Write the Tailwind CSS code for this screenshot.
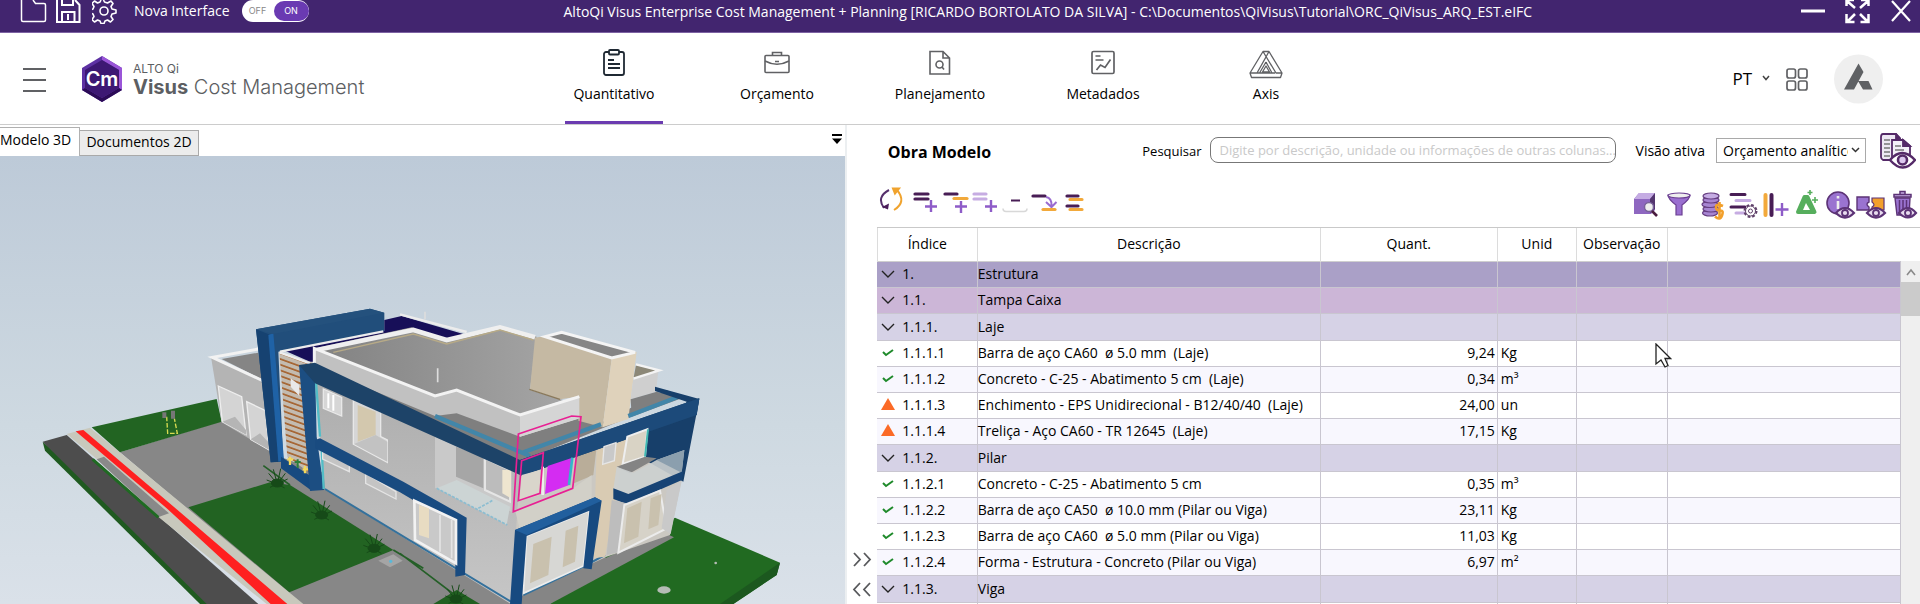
<!DOCTYPE html>
<html lang="pt">
<head>
<meta charset="utf-8">
<title>AltoQi Visus Cost Management</title>
<script src="https://cdn.jsdelivr.net/npm/@tailwindcss/browser@4"></script>
</head>
<body class="bg-white text-black font-['Open_Sans','Noto_Sans',sans-serif] text-sm h-screen overflow-hidden flex flex-col">

<header class="relative h-[33px] shrink-0 bg-[#42256f] border-b border-[#7d62a3] text-white flex items-start overflow-hidden">
  <div class="flex items-start pl-5">
    <button aria-label="Abrir"><svg width="28" height="24" fill="none" stroke="#fff" stroke-width="1.5"><path d="M1.500 0v20q0 1.500 1.500 1.500h21q1.500 0 1.500-1.500V5q0-1.500-1.500-1.500H15.500L13 0"/></svg></button>
    <button aria-label="Salvar" class="ml-2"><svg width="26" height="24" fill="none" stroke="#fff" stroke-width="2"><path d="M1 0v22h22.500V5L19 0M6 22V12h12.500v10M6 0v5h11V0M12 14v6"/></svg></button>
    <button aria-label="Configurações" class="ml-2.5"><svg width="26" height="24" fill="none" stroke="#fff" stroke-width="1.600" stroke-linejoin="round"><path d="M11.500 0l1 2 3 1 3.500-2 2 2.500-2 3 1 2.500 4 1v3l-4 1-1 2.500 2 3-2.500 2.500-3-2-2.500 1-1 2.500h-3l-1-2.500-2.500-1-3 2-2.500-2.500 2-3-1-2.500-3-1v-3l3-1 1-2.500-2-3 2.500-2.500 3 2 2.500-1 1-2"/><circle cx="12" cy="11" r="4"/></svg></button>
  </div>
  <span class="ml-4 leading-[22px] text-sm">Nova Interface</span>
  <button role="switch" aria-checked="true" class="ml-3 h-[22px] w-[67px] bg-white rounded-full flex items-center text-[9px] font-['Inter',sans-serif]"><span class="w-8 text-center text-[#888]">OFF</span><span class="h-5 flex-1 rounded-full bg-[#6a3ab2] text-white flex items-center justify-center">ON</span></button>
  <h1 class="ml-[255px] text-sm leading-[24px] whitespace-nowrap">AltoQi Visus Enterprise Cost Management + Planning [RICARDO BORTOLATO DA SILVA] - C:\Documentos\QiVisus\Tutorial\ORC_QiVisus_ARQ_EST.eIFC</h1>
  <div class="ml-auto flex pr-2">
    <button aria-label="Minimizar"><svg width="26" height="24"><path d="M1 11h24" stroke="#fff" stroke-width="3"/></svg></button>
    <button aria-label="Maximizar" class="ml-[18px]"><svg width="28" height="24" fill="none" stroke="#fff" stroke-width="2.500"><path d="M3 22l8-8M24 22l-8-8M3 1l8 7M24 1l-8 7M2.500 14v8h8M24.500 14v8h-8M2.500 6V0M24.500 6V0M4 0h6M17 0h6"/></svg></button>
    <button aria-label="Fechar" class="ml-[18px]"><svg width="22" height="24"><path d="M2 1l18 20M20 1L2 21" stroke="#fff" stroke-width="2.200"/></svg></button>
  </div>
</header>

<div class="h-[92px] shrink-0 border-b border-[#cccccc] flex items-stretch">
  <div class="w-[565px] shrink-0 flex items-center pl-[22px]">
    <button aria-label="Menu"><svg width="26" height="26"><path d="M1 3h23M1 14h23M1 25h23" stroke="#606164" stroke-width="2"/></svg></button>
    <svg class="ml-[33px]" width="42" height="46" viewBox="0 0 42 46"><path d="M21 0L41 12V34L21 46L1 34V12z" fill="#5d31a3"/><path d="M21 0L41 12V34L38 32V14L21 4z" fill="#9a55d8"/><path d="M1 34L21 46L41 34L38 32L21 42L4 32z" fill="#2b0b56"/><path d="M21 4L38 14V32L21 42L4 32V14z" fill="#3d1873"/><text x="21" y="30" text-anchor="middle" font-family="Inter" font-weight="600" font-size="20" fill="#fff">Cm</text></svg>
    <div class="ml-2.5 text-[#5c5e62] font-['Inter',sans-serif] pt-1">
      <div class="text-xs leading-3">ALTO Qi</div>
      <div class="text-xl leading-6 font-light"><span class="font-bold">Visus</span> Cost Management</div>
    </div>
  </div>
  <nav class="flex gap-[65px] text-sm">
    <a href="#" class="w-[98px] border-b-3 border-[#6b3bb0] flex flex-col items-center pt-4"><svg width="22" height="28" fill="none" stroke="#1f2933" stroke-width="1.800"><rect x="1" y="3" width="20" height="23" rx="2"/><rect x="6" y="1" width="10" height="4.500" rx="1" fill="#fff"/><path d="M5 11h6M5 15h12M5 19h12"/></svg><span class="mt-1.5 leading-[22px]">Quantitativo</span></a>
    <a href="#" class="w-[98px] flex flex-col items-center pt-4"><svg width="26" height="28" fill="none" stroke="#606164" stroke-width="1.600"><rect x="1" y="6.500" width="24" height="17" rx="1"/><path d="M8.500 6V3.500h9V6M1 12q12 6.500 24 0M11 12.500h4"/></svg><span class="mt-1.5 leading-[22px]">Orçamento</span></a>
    <a href="#" class="w-[98px] flex flex-col items-center pt-4"><svg width="22" height="28" fill="none" stroke="#606164" stroke-width="1.600"><path d="M1 2.500h13l6.500 6.500v16H1zM14 2.500V9h6.500"/><circle cx="10.500" cy="15.500" r="3.500"/><path d="M13 18l2 2.500"/></svg><span class="mt-1.5 leading-[22px]">Planejamento</span></a>
    <a href="#" class="w-[98px] flex flex-col items-center pt-4"><svg width="24" height="28" fill="none" stroke="#606164" stroke-width="1.700"><rect x="1" y="2.500" width="22" height="22" rx="1.500"/><path d="M4.500 7h5M4.500 11h8M5.500 21l4-5 4.500 2.500 5.500-8"/></svg><span class="mt-1.5 leading-[22px]">Metadados</span></a>
    <a href="#" class="w-[98px] flex flex-col items-center pt-4"><svg width="34" height="30" class="-mb-0.5" fill="none" stroke="#606164" stroke-width="1.300" stroke-linejoin="round"><path d="M14 2.500h6L33 24l-1.500 4.500h-29L1 24zM1 24h25M14 2.500L27 24h6M20 2.500L8 24M17 8L8 24M17 13l-6.500 11M17 13l6 11M17 17l-3.500 6h7z"/></svg><span class="mt-1.5 leading-[22px]">Axis</span></a>
  </nav>
  <div class="ml-auto flex items-center pr-[37px]">
    <button class="flex items-center text-[17px] leading-6">PT<svg class="ml-2.5" width="8" height="12" fill="none" stroke="#444" stroke-width="1.500"><path d="M1 3l3 3.500L7 3"/></svg></button>
    <button aria-label="Aplicativos" class="ml-4"><svg width="22" height="24" fill="none" stroke="#606164" stroke-width="1.700"><rect x="1" y="2" width="8.500" height="9" rx="2"/><rect x="12.500" y="2" width="8.500" height="9" rx="2"/><rect x="1" y="14" width="8.500" height="9" rx="2"/><rect x="12.500" y="14" width="8.500" height="9" rx="2"/></svg></button>
    <button aria-label="Conta" class="ml-[26px]"><svg width="49" height="50"><circle cx="24.500" cy="25" r="24.500" fill="#efefef"/><path d="M24.500 9.500l5 8.500-9.500 17.500H10zM24 27h10.500l4 8.500H29z" fill="#5f6164"/></svg></button>
  </div>
</div>

<main class="flex-1 min-h-0 flex">
  <section class="w-[44%] shrink-0 flex flex-col">
    <div class="h-[31px] shrink-0 flex items-end text-sm">
      <button class="h-[29px] w-20 border-t border-r border-[#b0b0b0] bg-white text-left leading-5 pb-1 whitespace-nowrap">Modelo 3D</button>
      <button class="h-[26px] w-[119px] border border-l-0 border-[#a9a9a9] bg-[#ececec] leading-5 pb-0.5 whitespace-nowrap">Documentos 2D</button>
      <button aria-label="Opções" class="ml-auto mr-0.5 mb-2.5"><svg width="12" height="14"><path d="M1 3h10" stroke="#000" stroke-width="2"/><path d="M1 6.500h10L6 12z"/></svg></button>
    </div>
    <svg class="w-full flex-1 min-h-0" viewBox="0 -402 2535 1344" preserveAspectRatio="xMinYMin slice" role="img" aria-label="Modelo 3D da obra">
      <defs>
        <linearGradient id="sky" x1="0" y1="0" x2="0" y2="1"><stop offset="0" stop-color="#bdcad8"/><stop offset=".6" stop-color="#ced9e1"/><stop offset="1" stop-color="#dae1e9"/></linearGradient>
        <linearGradient id="roof" x1="0" x2="1"><stop offset="0" stop-color="#828282"/><stop offset="1" stop-color="#a5a5a5"/></linearGradient>
        <linearGradient id="wall" x1="0" x2="0" y2="1"><stop offset="0" stop-color="#adadad"/><stop offset="1" stop-color="#c6c6c6"/></linearGradient>
        <pattern id="slats" width="20" height="17" patternUnits="userSpaceOnUse" patternTransform="skewY(20)"><path d="M0 0h20v17H0z" fill="#c3bbb0"/><path d="M0 3h20" stroke="#a35c26" stroke-width="5"/></pattern>
        <g id="bush" stroke="#164a18" stroke-width="3"><path d="M0 20L-26-12M0 20L-12-24M0 20L10-26M0 20L24-12M0 20L-32 8M0 20L31 5M0 20L-22 30M0 20L22 32"/><ellipse cx="0" cy="17" rx="18" ry="12" fill="#164a18"/></g>
      </defs>
      <path d="M0-402H2535V942H0z" fill="url(#sky)"/>
      <path d="M128 455L135 482L600 942H700z" fill="#1f5a20"/>
      <path d="M128 455L200 435L775 942H620z" fill="#4d4d4d"/>
      <path d="M360 487L665 393L840 500L1800 850L1700 942H900z" fill="#878787"/>
      <path d="M200 432L270 413L910 942H800L480 685L290 507z" fill="#c8c8bc"/>
      <path d="M290 508L312 500L507 670L478 680z" fill="#898989"/><path d="M278 508L475 682" stroke="#1f6a22" stroke-width="9"/>
      <path d="M227 424L250 420L530 658L862 942H812L500 655z" fill="#ff2020"/>
      <path d="M275 412L650 327L665 395L360 487z" fill="#226422"/>
      <path d="M565 652L810 577L870 585L1180 780L868 907z" fill="#226322"/>
      <path d="M1200 790L1400 942M790 527L870 585M1180 780L1270 835" stroke="#245f27" stroke-width="5"/>
      <path d="M1135 812L1180 793L1208 812L1170 832z" fill="#a5a5a5"/><circle cx="1172" cy="814" r="5" fill="#59b8d8"/>
      <path d="M500 380L503 430H532L523 385" stroke="#d9dc51" stroke-width="4" fill="none" stroke-dasharray="14 5"/><path d="M493 367V384M519 362V386" stroke="#777" stroke-width="12"/>
      <path d="M2025 683L2340 818L2330 855L2200 942H1650L1820 800z" fill="#216a21"/><path d="M2340 818L2330 855L2200 942H2160z" fill="#1c581f"/>
      <path d="M1550 890L1980 722L2022 742L1650 942H1520z" fill="#858585"/><path d="M1815 800L1980 722" stroke="#216a21" stroke-width="9"/>
      <ellipse cx="1992" cy="900" rx="20" ry="11" fill="#b5bcb5"/><circle cx="2147" cy="819" r="4" fill="#b5bcb5"/>
      <path d="M1300 942L1370 900L1440 942z" fill="#216021"/>
      <use href="#bush" x="832" y="562"/><use href="#bush" x="965" y="658"/><use href="#bush" x="1122" y="758"/><use href="#bush" x="1368" y="910"/>
      <!-- garage wing -->
      <path d="M633 200L790 270L812 484L665 397z" fill="#b4b4b4"/><path d="M655 288L725 320L738 434L667 395zM740 335L797 362L808 480L752 448z" fill="#d4d4d4" stroke="#eee" stroke-width="4"/><path d="M667 395L705 380L738 420V434zM752 448L780 430L808 460V480z" fill="#b5b5b5"/>
      <path d="M665 207L775 188L790 270z" fill="#858585"/><path d="M775 177L637 202L790 273" fill="none" stroke="#f2f2f2" stroke-width="9"/>
      <!-- blue tower -->
      <path d="M768 118L1110 56L1153 68V125L835 185L850 515L812 517z" fill="#214e7b"/><path d="M768 118L812 135L838 515L812 517z" fill="#164271"/><path d="M805 135L820 130L852 510L835 515z" fill="#1f62a6"/><path d="M768 118L1110 56L1153 68L820 132z" fill="#24517d"/>
      <path d="M855 182L1153 123V90L1205 78L1390 132L1340 160L1230 125L945 180V215H930z" fill="#170f58"/><path d="M840 185L1150 124M1200 73L1400 126" stroke="#ececec" stroke-width="7"/>
      <path d="M838 187L945 220V560L862 500z" fill="url(#slats)"/><path d="M838 187L930 220" stroke="#eee" stroke-width="7"/><path d="M872 265L898 285V318L872 290z" fill="#e9e9e9"/>
      <path d="M843 500L935 560V602L843 535z" fill="#174a80"/><path d="M870 500v25M915 528v22M862 508h18M908 538h16" stroke="#f4d95b" stroke-width="7"/><path d="M893 508v26M884 516h18" stroke="#2c7f3b" stroke-width="6"/>
      <!-- front walls -->
      <path d="M945 275L1565 540L1533 942L975 597z" fill="url(#wall)"/>
      <path d="M1560 545L2090 370L2045 570L2010 735L1820 800L1570 915L1533 942z" fill="#cbc8c2"/>
      <path d="M975 597L1533 935M1570 915L1750 830L1815 795" stroke="#34719c" stroke-width="6" fill="none"/>
      <path d="M897 225L945 235L950 440L972 600L930 603z" fill="#1c4e82"/><path d="M948 275L960 440M965 475L971 597" stroke="#53bdc7" stroke-width="7"/>
      <path d="M970 297L1025 322V378L970 355zM1060 330L1142 365V440L1162 450V517L1060 462z" fill="#d6d6d6" stroke="#e8e8e8" stroke-width="4"/><path d="M1073 345L1127 365V435L1073 455z" fill="#d3c8ae"/><path d="M1062 462L1127 435L1162 455V515z" fill="#c2c2c2"/><path d="M985 310V355M1000 315V362" stroke="#fff" stroke-width="6"/>
      <path d="M968 478L1048 525V545L968 507zM1097 550L1188 605V627L1097 580z" fill="#c4c4c4" stroke="#e4e4e4" stroke-width="4"/>
      <!-- upper left terrace opening -->
      <path d="M1305 440L1535 540V665L1365 600L1305 595z" fill="#c9c9c9"/><path d="M1368 470L1450 500V595L1368 560z" fill="#a6a6a6"/><path d="M1455 505L1530 540V635L1455 600z" fill="#bcbcbc" stroke="#e5e5e5" stroke-width="6"/><path d="M1507 540h26v85l-26-15z" fill="#eee5cf"/>
      <path d="M1310 595L1370 570L1530 650L1520 705z" fill="#ccd4d4"/><path d="M1310 595L1522 705M1435 655L1480 630" stroke="#8bbdd1" stroke-width="5" stroke-dasharray="9 4"/>
      <!-- roof well and parapets -->
      <path d="M945 175L1235 112L1340 150L1500 108L1610 140L1590 300L1690 330L1560 375L1370 305L1305 320z" fill="url(#roof)"/>
      <path d="M950 180L1240 120L1340 150L1500 112L1605 142" fill="none" stroke="#efefef" stroke-width="14"/><path d="M1000 187L1240 132L1340 162L1500 120L1600 150" fill="none" stroke="#b7aa87" stroke-width="4"/>
      <path d="M943 175L1305 318L1370 300L1560 375L1738 320V400L1560 455L1370 372L1305 380L945 235z" fill="#c1c1c1"/><path d="M1560 375L1738 320V400L1560 455z" fill="#d5d5d5"/>
      <path d="M950 232L1305 378L1370 370L1560 440L1740 385L1800 400L2000 300L2040 320L1560 515z" fill="#7f7f7f"/>
      <!-- stair tower -->
      <path d="M1605 143L1635 138L1835 207L1808 412L1735 392V320L1680 328L1590 298z" fill="#c5b9a3"/><path d="M1835 207L1910 185L1885 387L1808 412z" fill="#dfd2bb"/><path d="M1635 140L1685 127L1905 187L1835 204z" fill="#868686" stroke="#f4f4f4" stroke-width="9"/>
      <path d="M1560 375L1738 320V385L1560 440z" fill="#d5d5d5"/><path d="M943 240V175L1305 318L1370 300L1560 375L1738 320" fill="none" stroke="#f3f3f3" stroke-width="9"/>
      <path d="M1588 298L1680 328" stroke="#8a795b" stroke-width="4"/><path d="M1908 225L1978 242L1900 268z" fill="#8c8878"/><path d="M1900 268L1975 243L1968 305L1892 328z" fill="#cfcfcf"/><path d="M1908 223L1978 241L1900 266" fill="none" stroke="#f4f4f4" stroke-width="7"/>
      <path d="M1892 328L1970 305L2045 325L1895 380z" fill="#7f7f7f"/>
      <path d="M1790 475L1880 440L1815 800L1780 805z" fill="#d9cbb3"/><path d="M1730 490L1790 470L1780 555L1722 580z" fill="#b9ad99"/>
      <path d="M1305 378L1590 498M1570 487L1803 403M1885 378L2035 320" stroke="#4286a9" stroke-width="13"/>
      <path d="M1965 290L2098 327L2050 575L1935 510L1945 420L2030 390L2060 335L1965 303z" fill="#173f6a"/>
      <path d="M897 225L945 218L1560 510L2098 325L2090 375L1565 557L945 280z" fill="#1d4368"/><path d="M1560 510L2098 325L2090 375L1565 557z" fill="#1c4a7a"/>
      <path d="M945 450L960 445L1210 575L1400 683L1395 855L1366 860V705L1200 607L945 475z" fill="#194b80"/>
      <!-- openings on the right side -->
      <path d="M1243 632L1368 690V820L1245 750z" fill="#c9c9c9" stroke="#f2f2f2" stroke-width="8"/><path d="M1257 645L1287 655V745L1257 735z" fill="#e8dcc2"/><path d="M1320 675V785M1355 690V805" stroke="#e4e4e4" stroke-width="5"/>
      <path d="M1565 555L1620 540V615L1558 632z" fill="#d9d5cb"/><path d="M1545 660L1720 595L1775 555V630L1560 720z" fill="#d2d0c8"/>
      <path d="M1643 528L1717 503L1708 585L1635 612z" fill="#d42cf2"/><path d="M1717 503L1707 585" stroke="#34b6c8" stroke-width="8"/><path d="M1628 530V615" stroke="#eee" stroke-width="8"/>
      <path d="M1812 470L1848 458L1843 512L1808 523z" fill="#c9c9c9" stroke="#e6e6e6" stroke-width="4"/><path d="M1882 440L1942 418L1935 500L1868 522z" fill="#d9d3c5" stroke="#eee" stroke-width="6"/><path d="M1944 418L1935 500" stroke="#41b8b1" stroke-width="6"/>
      <path d="M1850 530L1935 500L1970 505L1890 550z" fill="#848484"/><path d="M1850 530L1900 548L1970 510L2053 480L2045 548L1885 612L1840 597z" fill="#ccd0d0" opacity=".9"/><path d="M1970 510L2053 480L2045 548z" fill="#8b9fae"/>
      <path d="M1840 595L1885 612L2050 543L2046 570L1881 642L1840 627z" fill="#174374"/>
      <path d="M1835 630L1880 640L1860 785L1820 795z" fill="#bdbdbd"/><path d="M1873 645L1980 602L2000 715L1855 788z" fill="#d6d2c8" stroke="#ebebeb" stroke-width="6"/><path d="M1882 655L1925 635L1915 740L1872 760zM1952 625L1985 612L1975 705L1945 718z" fill="#c9c1ae"/><path d="M2000 600L2045 572L2012 732L1985 715z" fill="#c9c9c9"/>
      <path d="M1580 738L1768 662L1750 828L1570 910z" fill="#d7d7d4" stroke="#ececec" stroke-width="5"/><path d="M1600 762L1655 740L1645 855L1590 880zM1697 722L1735 707L1725 815L1688 832z" fill="#c9c1ae"/>
      <path d="M1545 720L1785 622L1805 632L1775 838L1750 835L1768 662L1580 738L1565 942H1530z" fill="#174a80"/><path d="M1545 720L1785 622L1805 632L1580 735z" fill="#215f9e"/>
      <path d="M1555 432L1715 378L1743 380L1718 595L1540 665zM1565 512L1630 488L1620 610L1555 632z" fill="none" stroke="#e81f93" stroke-width="5"/>
      <path d="M1313 235V277M1275 65V88" stroke="#ddd" stroke-width="5"/>
    </svg>
  </section>

  <div class="w-8 shrink-0 flex flex-col justify-end items-center text-[#555] border-l-2 border-[#eceff1]">
    <button aria-label="Expandir"><svg width="20" height="30" fill="none" stroke="#58595c" stroke-width="1.800"><path d="M2 9l6 6.500L2 22M12 9l6 6.500L12 22"/></svg></button>
    <button aria-label="Recolher"><svg width="20" height="30" fill="none" stroke="#58595c" stroke-width="1.800"><path d="M8 9l-6 6.500L8 22M18 9l-6 6.500L18 22"/></svg></button>
  </div>

  <section class="flex-1 min-w-0 flex flex-col">
    <div class="h-[61px] shrink-0 pt-2 pl-[11px] pr-1 flex items-start">
      <h2 class="font-bold text-base leading-[38px] whitespace-nowrap">Obra Modelo</h2>
      <label for="q" class="ml-auto leading-9 text-[13px]">Pesquisar</label>
      <input id="q" type="text" placeholder="Digite por descrição, unidade ou informações de outras colunas..." class="mt-1 ml-2 h-[26px] w-[406px] rounded-lg border border-[#777] pl-[9px] pr-0 text-[13px] placeholder:text-[#c9c9c9]">
      <label for="v" class="ml-5 leading-9 text-sm whitespace-nowrap">Visão ativa</label>
      <div class="relative ml-[11px] mt-[5px]"><select id="v" class="appearance-none h-[25px] w-[150px] border border-[#a9a9a9] bg-white pl-1.5 pr-[17px] text-sm leading-5 overflow-hidden"><option>Orçamento analítico</option></select><svg class="absolute right-1.5 top-2 pointer-events-none" width="9" height="8" fill="none" stroke="#333" stroke-width="1.500"><path d="M1 2l3.500 3.500L8 2"/></svg></div>
      <button aria-label="Visualizar documentos" class="ml-3.5"><svg width="36" height="36" fill="none" stroke="#552a68" stroke-width="1.800"><path d="M3 1h13l4 4v22H3q-2-1-2-3V4q0-3 2-3z" fill="#eee8f4"/><path d="M12 7h11l7 6v13H12z" fill="#f4f0f8"/><path d="M16 1l4 5h-4zM23 7l7 6h-7z" fill="#552a68"/><path d="M4 7h6M4 11h6M4 15h6M4 19h6M4 23h6M15 13h6M15 17h9" stroke="#777" stroke-width="1.300"/><path d="M10 27q12-14 25 0q-12 15-25 0z" fill="#fff" stroke-width="2.400"/><circle cx="22.500" cy="27" r="4.500" fill="#ddc9ef" stroke-width="2.600"/></svg></button>
    </div>

    <div class="h-[41px] shrink-0 pl-0.5 flex items-start justify-between">
      <div class="flex">
        <button aria-label="Atualizar" class="w-[30px]"><svg width="30" height="32" fill="none" stroke-width="2"><path d="M10 4Q-3 11 5 22" stroke="#56306c"/><path d="M3 21l6 2.500 1-6z" fill="#4a1c59"/><path d="M15 24Q28 16 18 4" stroke="#f0a32e"/><path d="M14 2.500h6l-4 5z" fill="#f0a32e" stroke="#f0a32e"/></svg></button>
        <button aria-label="Adicionar nível" class="w-[30px]"><svg width="30" height="32" fill="none"><path d="M6 8h13M6 13h13" stroke="#481d55" stroke-width="3.200" stroke-linecap="round"/><path d="M22 14v12M16 20.500h12" stroke="#8e5cc8" stroke-width="2.400"/></svg></button>
        <button aria-label="Adicionar subnível" class="w-[30px]"><svg width="30" height="32" fill="none"><path d="M6 8h12" stroke="#481d55" stroke-width="3.200" stroke-linecap="round"/><path d="M15 12.500h13" stroke="#f2a93b" stroke-width="3.200" stroke-linecap="round"/><path d="M22 15v12M16 20.500h12" stroke="#8e5cc8" stroke-width="2.400"/></svg></button>
        <button aria-label="Adicionar item" class="w-[30px]"><svg width="30" height="32" fill="none"><path d="M5 8h12M5 13h12" stroke="#c6ace2" stroke-width="3.200" stroke-linecap="round"/><path d="M22 14v12M16 20.500h12" stroke="#8e5cc8" stroke-width="2.400"/></svg></button>
        <button aria-label="Remover" class="w-[30px]"><svg width="30" height="32" fill="none"><path d="M4 22.500q0 3 3 3h18q3 0 3-3" stroke="#d8d8d8" stroke-width="1.500"/><path d="M12 14.500h9" stroke="#481d55" stroke-width="2"/></svg></button>
        <button aria-label="Mover" class="w-[30px]"><svg width="30" height="32" fill="none"><path d="M4 10h12" stroke="#481d55" stroke-width="3.200" stroke-linecap="round"/><path d="M17 11q6 1 5.500 9M17 16l5.500 5 5-5" stroke="#9a6bd0" stroke-width="2"/><path d="M14 23.500h12" stroke="#f2a93b" stroke-width="3.200" stroke-linecap="round"/></svg></button>
        <button aria-label="Agrupar" class="w-[30px]"><svg width="30" height="32" fill="none" stroke-width="3.200" stroke-linecap="round"><path d="M8 10h11M8 20h11" stroke="#481d55"/><path d="M11 13.500h12M11 23.500h12" stroke="#f2a93b"/></svg></button>
      </div>
      <div class="flex">
        <button aria-label="Inspecionar" class="w-8"><svg width="32" height="34" fill="none"><path d="M2 13l5-6h16v17l-4 4H2z" fill="#8e67c0"/><path d="M2 13l5-6h16l-5 6z" fill="#c5ace3"/><path d="M23 7l-5 6v14l5-4z" fill="#54366f"/><circle cx="17" cy="21" r="4.500" fill="#eee" stroke="#79639a" stroke-width="1.500"/><path d="M20 25l5 5" stroke="#4a1c3f" stroke-width="2.600"/></svg></button>
        <button aria-label="Filtrar" class="w-8"><svg width="32" height="34" stroke="#6b3f91" stroke-width="1.200"><path d="M4 9q0 4 8 10v10h6V19q8-6 8-10z" fill="#9a6fd0"/><ellipse cx="15" cy="9.500" rx="11" ry="2.500" fill="#eee"/></svg></button>
        <button aria-label="Custos" class="w-8"><svg width="32" height="34" fill="#a785d2" stroke="#653d80" stroke-width="1.200"><ellipse cx="14" cy="27" rx="7.500" ry="3"/><ellipse cx="15" cy="23" rx="8" ry="3"/><ellipse cx="14" cy="18.500" rx="8" ry="3"/><ellipse cx="15" cy="14" rx="8" ry="3"/><ellipse cx="15" cy="10" rx="8" ry="3" fill="#c5ace3"/><path d="M27 20q-7-3-7 1t4 3.500 2 5-7 1M23.500 16v17" fill="none" stroke="#f2a02c" stroke-width="2.600"/></svg></button>
        <button aria-label="Configurar lista" class="w-8"><svg width="32" height="34" fill="none"><path d="M3 8.500h14M3 21h14" stroke="#481d55" stroke-width="3" stroke-linecap="round"/><path d="M8 14.500h14M8 27h9" stroke="#c6ace2" stroke-width="3" stroke-linecap="round"/><circle cx="22.500" cy="25" r="5.500" stroke="#5f4069" stroke-width="3" stroke-dasharray="2.500 1.800" fill="#fff"/><circle cx="22.500" cy="25" r="5" fill="#fff" stroke="#5f4069"/><circle cx="22.500" cy="25" r="2" stroke="#5f4069"/></svg></button>
        <button aria-label="Adicionar coluna" class="w-8"><svg width="32" height="34" fill="none"><path d="M5.500 9v20" stroke="#f2a93b" stroke-width="4" stroke-linecap="round"/><path d="M11.500 9v20" stroke="#481d55" stroke-width="4" stroke-linecap="round"/><path d="M22 17v13M15.500 23.500h13" stroke="#8e5cc8" stroke-width="2.400"/></svg></button>
        <button aria-label="Assistente" class="w-8"><svg width="32" height="34" fill="none" stroke="#56ae5d"><path d="M12.500 11h3l7 15H6z" stroke-width="4" stroke-linejoin="round" fill="#56ae5d"/><path d="M14 17l4 7h-7z" fill="#fff" stroke="none"/><path d="M18 4v5M15.500 6.500h5M23 11v6M20 14h6" stroke-width="1.600"/></svg></button>
        <button aria-label="Exibir informações" class="w-8"><svg width="32" height="34" fill="none" stroke="#5c3376"><circle cx="14" cy="17" r="11" fill="#9a73d0" stroke-width="1.600"/><path d="M14 15v8M14 10v2.500" stroke="#eee" stroke-width="2.600"/><path d="M12 27q9-10 18 0q-9 9-18 0z" fill="#e8dcef" stroke-width="2.200"/><circle cx="21" cy="27" r="3" stroke-width="1.800"/></svg></button>
        <button aria-label="Exibir vínculos" class="w-8"><svg width="32" height="34" fill="none" stroke="#5c3376"><path d="M1 11h12v5q-4 2 0 5v3H1z" fill="#9a73d0" stroke-width="1.400"/><path d="M16 12h12v12H16v-3q4-2 0-5z" fill="#f2a02c" stroke-width="1.200"/><path d="M11 27q9-10 18 0q-9 9-18 0z" fill="#e8dcef" stroke-width="2.200"/><circle cx="20" cy="27" r="3" stroke-width="1.800"/></svg></button>
        <button aria-label="Exibir excluídos" class="w-8"><svg width="32" height="34" fill="none" stroke="#5c3376"><path d="M7 12h15l-1 17H9z" fill="#9a73d0" stroke-width="1.400"/><path d="M6 11V8.500h17V11zM12 8V5.500h5V8M11.500 14v12M15 14v12M18.500 14v8" fill="#c5ace3" stroke-width="1.500"/><path d="M11 27q9-10 17 0q-8 9-17 0z" fill="#e8dcef" stroke-width="2.200"/><circle cx="20" cy="27" r="3" stroke-width="1.800"/></svg></button>
      </div>
    </div>

    <div class="relative flex-1 min-h-0 overflow-hidden flex border-t border-[#c9c9c9]">
      <table class="flex-1 table-fixed border-collapse w-full text-sm">
        <colgroup><col class="w-[100px]"><col class="w-[343px]"><col class="w-[177px]"><col class="w-[79px]"><col class="w-[91px]"><col></colgroup>
        <thead><tr class="h-[33px] border-b border-[#cfcfcf] *:border-r *:border-[#dcdcdc] *:font-normal *:last:border-r-0"><th class="border-l">Índice</th><th>Descrição</th><th>Quant.</th><th>Unid</th><th>Observação</th><th></th></tr></thead>
        <tbody id="rows"></tbody>
      </table>
      <div class="w-[19px] shrink-0 mt-[33px] bg-[#efefef]" role="scrollbar" aria-controls="rows" aria-valuenow="0"><svg width="19" height="21" fill="none" stroke="#8a8a8a" stroke-width="1.600"><path d="M6 14l4-5 4 5"/></svg><div class="h-[34px] bg-[#cbcbcb]"></div></div>
      <svg class="absolute left-[778px] top-[115px]" width="17" height="26"><path d="M1 1v20l5-4 4 7 3-1.500-3-7h5.500z" fill="#fff" stroke="#222" stroke-width="1.300"/></svg>
    </div>
  </section>
</main>

<script>
const data = [
  ['a','1.','Estrutura'],['b','1.1.','Tampa Caixa'],['c','1.1.1.','Laje'],
  ['ok','1.1.1.1','Barra de aço CA60  ø 5.0 mm  (Laje)','9,24','Kg'],
  ['ok','1.1.1.2','Concreto - C-25 - Abatimento 5 cm  (Laje)','0,34','m³'],
  ['warn','1.1.1.3','Enchimento - EPS Unidirecional - B12/40/40  (Laje)','24,00','un'],
  ['warn','1.1.1.4','Treliça - Aço CA60 - TR 12645  (Laje)','17,15','Kg'],
  ['c','1.1.2.','Pilar'],
  ['ok','1.1.2.1','Concreto - C-25 - Abatimento 5 cm','0,35','m³'],
  ['ok','1.1.2.2','Barra de aço CA50  ø 10.0 mm (Pilar ou Viga)','23,11','Kg'],
  ['ok','1.1.2.3','Barra de aço CA60  ø 5.0 mm (Pilar ou Viga)','11,03','Kg'],
  ['ok','1.1.2.4','Forma - Estrutura - Concreto (Pilar ou Viga)','6,97','m²'],
  ['c','1.1.3.','Viga'],
  ['none','','']
];
const bg = {a:'h-[26px] bg-[#aaa0c7]', b:'h-[26px] bg-[#ccb6d7]', c:'h-[27px] bg-[#d6d2e6]'};
const chevron = '<svg width="14" height="14" fill="none" stroke="#222" stroke-width="1.400"><path d="M1 4l6 6 6-6"/></svg>';
const icons = {
  a: chevron, b: chevron, c: chevron, none: '',
  ok: '<svg width="14" height="14" fill="none" stroke="#1f8a2b" stroke-width="2"><path d="M2 6l3 3 7-5"/></svg>',
  warn: '<svg width="14" height="14"><path d="M7 0l7 12H0z" fill="#fb6a26"/></svg>'
};
let n = 0;
document.getElementById('rows').innerHTML = data.map(([k,i,d,q='',u='']) => {
  const cls = bg[k] || (n++ % 2 ? 'h-[26px] bg-[#f8f7fe]' : 'h-[26px] bg-white');
  if (bg[k]) n = 0;
  return `<tr class="${cls} border-b border-[#c9c6d0] leading-5 whitespace-pre *:p-0 *:border-r *:border-[#c9c6d0]"><td><div class="flex items-center gap-[7px] pl-1">${icons[k]}<span>${i}</span></div></td><td><div>${d}</div></td><td><div class="text-right pr-0.5">${q}</div></td><td><div class="pl-[3px]">${u}</div></td><td></td><td></td></tr>`;
}).join('');
</script>
</body>
</html>
